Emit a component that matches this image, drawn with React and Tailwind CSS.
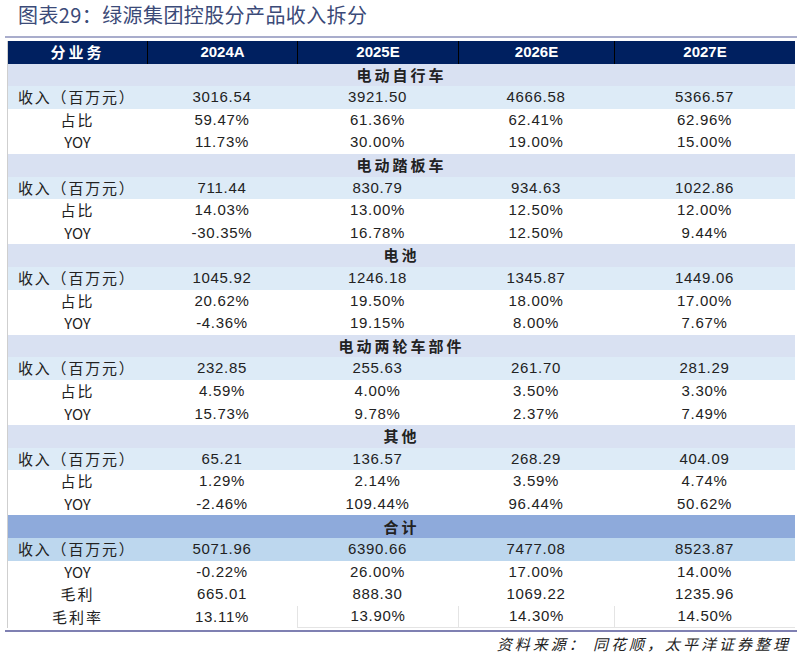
import React from "react";

const sections = [
  {
    name: "电动自行车",
    rows: [
      ["收入（百万元）", "3016.54", "3921.50", "4666.58", "5366.57"],
      ["占比", "59.47%", "61.36%", "62.41%", "62.96%"],
      ["YOY", "11.73%", "30.00%", "19.00%", "15.00%"],
    ],
  },
  {
    name: "电动踏板车",
    rows: [
      ["收入（百万元）", "711.44", "830.79", "934.63", "1022.86"],
      ["占比", "14.03%", "13.00%", "12.50%", "12.00%"],
      ["YOY", "-30.35%", "16.78%", "12.50%", "9.44%"],
    ],
  },
  {
    name: "电池",
    rows: [
      ["收入（百万元）", "1045.92", "1246.18", "1345.87", "1449.06"],
      ["占比", "20.62%", "19.50%", "18.00%", "17.00%"],
      ["YOY", "-4.36%", "19.15%", "8.00%", "7.67%"],
    ],
  },
  {
    name: "电动两轮车部件",
    rows: [
      ["收入（百万元）", "232.85", "255.63", "261.70", "281.29"],
      ["占比", "4.59%", "4.00%", "3.50%", "3.30%"],
      ["YOY", "15.73%", "9.78%", "2.37%", "7.49%"],
    ],
  },
  {
    name: "其他",
    rows: [
      ["收入（百万元）", "65.21", "136.57", "268.29", "404.09"],
      ["占比", "1.29%", "2.14%", "3.59%", "4.74%"],
      ["YOY", "-2.46%", "109.44%", "96.44%", "50.62%"],
    ],
  },
];

const total = {
  name: "合计",
  rows: [
    ["收入（百万元）", "5071.96", "6390.66", "7477.08", "8523.87"],
    ["YOY", "-0.22%", "26.00%", "17.00%", "14.00%"],
    ["毛利", "665.01", "888.30", "1069.22", "1235.96"],
    ["毛利率", "13.11%", "13.90%", "14.30%", "14.50%"],
  ],
};

const widths = ["w-[139px]", "w-[150px]", "w-[161px]", "w-[156px]", "w-[181px]"];

const NUM = "font-['Liberation_Sans','Noto_Sans_CJK_SC',sans-serif]";
const CJK = "font-['Noto_Sans_CJK_SC','Liberation_Sans',sans-serif]";

function labelClass(label) {
  if (label.startsWith("收入")) return "justify-start pl-[10px] tracking-[1.8px]";
  if (label === "YOY") return "justify-center";
  return "justify-center tracking-[2px]";
}

function DataRow({ row, bg, last }) {
  return (
    <div className={`flex h-[22.6px] items-center ${bg}`}>
      <div
        className={`${widths[0]} ${CJK} h-full flex items-center ${labelClass(row[0])} text-[15px] text-[#222]`}
      >
        {row[0]}
      </div>
      {row.slice(1).map((v, i) => (
        <div
          key={i}
          className={`${widths[i + 1]} ${NUM} h-full flex items-center justify-center text-[15px] text-[#222] tracking-[0.7px] ${
            last && i > 0 ? "border-l border-b border-[#e4e4e4]" : ""
          }`}
        >
          {v}
        </div>
      ))}
    </div>
  );
}

function SectionHead({ name, bg }) {
  return (
    <div
      className={`h-[22.6px] flex items-center justify-center ${bg} ${CJK} text-[15px] font-bold text-[#222] tracking-[3px]`}
    >
      {name}
    </div>
  );
}

export default function App() {
  return (
    <div className="w-[805px] h-[659px] bg-white overflow-hidden">
      <div
        className={`pl-[18px] pt-[2px] h-[36px] text-[20px] leading-[26px] text-[#3b4a78] tracking-[0.4px] ${CJK}`}
      >
        图表29：绿源集团控股分产品收入拆分
      </div>
      <div className="ml-[5px] w-[792px] h-[2px] bg-[#a9adcc]" />
      <div className="ml-[7px] mt-[3px] w-[788px] border-l border-[#cfcfcf]">
        <div className="flex h-[22.6px] bg-[#002060] text-white text-[15px] font-bold">
          <div className={`${widths[0]} ${CJK} flex items-center justify-center tracking-[3px]`}>
            分业务
          </div>
          {["2024A", "2025E", "2026E", "2027E"].map((h, i) => (
            <div
              key={h}
              className={`${widths[i + 1]} ${NUM} flex items-center justify-center border-l border-black`}
            >
              {h}
            </div>
          ))}
        </div>
        {sections.map((s) => (
          <div key={s.name}>
            <SectionHead name={s.name} bg="bg-[#d9e1f2]" />
            {s.rows.map((r, i) => (
              <DataRow key={i} row={r} bg={i === 0 ? "bg-[#ddebf7]" : "bg-white"} />
            ))}
          </div>
        ))}
        <SectionHead name={total.name} bg="bg-[#8eaadb]" />
        {total.rows.map((r, i) => (
          <DataRow
            key={i}
            row={r}
            bg={i === 0 ? "bg-[#bdd7ee]" : "bg-white"}
            last={i === total.rows.length - 1}
          />
        ))}
      </div>
      <div className="ml-[5px] mt-[2px] w-[792px] h-[2px] bg-[#7f80b2]" />
      <div
        className={`flex justify-end pr-[14px] pt-[1px] text-[15px] italic text-[#222] tracking-[3px] ${CJK}`}
      >
        资料来源：&nbsp;同花顺，太平洋证券整理
      </div>
    </div>
  );
}
